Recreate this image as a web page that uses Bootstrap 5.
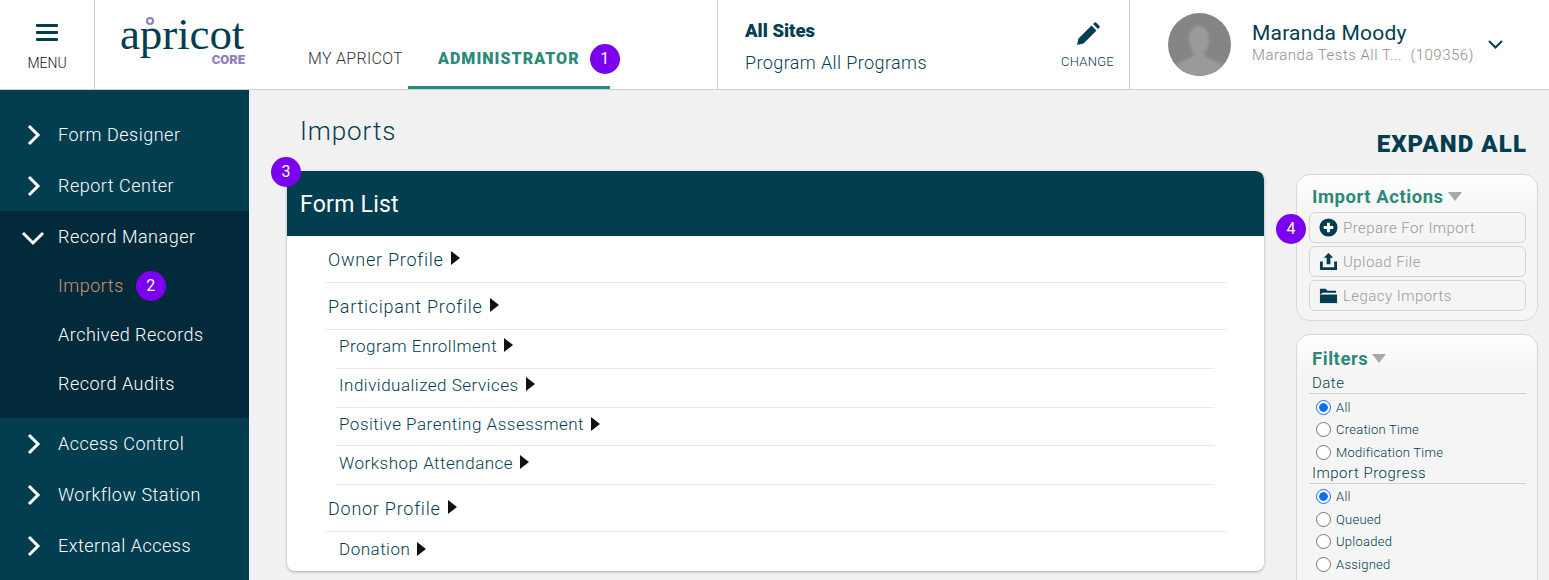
<!DOCTYPE html>
<html>

<head>
    <link rel="stylesheet" href="https://cdn.jsdelivr.net/npm/bootstrap@5.3.0/dist/css/bootstrap.min.css">
    <style>
        html, body { height: 580px; overflow: hidden; }
        body { font-family: Roboto, "Liberation Sans", sans-serif; color: #023e50; background: #f1f1f1; }
        .top { height: 90px; background: #fff; border-bottom: 1px solid #cfcfcf; }
        .menu-box { width: 95px; border-right: 1px solid #cfcfcf; font-size: 14px; font-weight: 300; color: #111; }
        .menu-box svg { margin-top: 24px; }
        .menu-box span { margin-top: 11px; }
        .logo-box { width: 213px; padding: 16px 0 0 25px; position: relative; }
        .logo { font-family: "Liberation Serif", serif; font-size: 45px; line-height: 36px; color: #023e50; letter-spacing: -.1px; }
        .logo-dot { position: absolute; left: 51px; top: 17px; width: 8px; height: 8px; border: 2px solid #8b80b9; border-radius: 50%; background: #fff; box-shadow: 0 0 0 1px #fff; }
        .core { font-size: 13px; font-weight: 900; color: #8b80b9; line-height: 12px; text-align: right; width: 125px; margin-top: 2px; }
        .tabs { width: 409px; }
        .tab { font-size: 16px; letter-spacing: .3px; height: 48px; }
        .tab-my { width: 100px; font-weight: 300; color: #333; padding-top: 6px; }
        .tab-admin { width: 202px; padding-left: 30px; padding-bottom: 9px; font-weight: 900; color: #2a8a7a; border-bottom: 3px solid #2a8a7a; letter-spacing: 1.05px; gap: 10px; }
        .tab-admin .num { flex: none; }
        .site-box { width: 413px; border-left: 1px solid #cfcfcf; border-right: 1px solid #cfcfcf; padding: 0 15px 0 27px; }
        .site-a { font-size: 18.500px; font-weight: 900; line-height: 24px; margin-top: 5px; }
        .site-b { font-size: 18px; font-weight: 300; line-height: 24px; margin-top: 8px; letter-spacing: .4px; }
        .pencil { margin-top: 5px; }
        .change { font-size: 13px; font-weight: 300; color: #023e50; margin-top: 6px; letter-spacing: .25px; }
        .user-box { padding-left: 38px; }
        .avatar { width: 63px; height: 63px; background: #858585; margin-right: 21px; }
        .avatar path { filter: blur(1.5px); }
        .user-a { font-size: 21px; line-height: 26px; letter-spacing: .2px; margin-top: -6px; }
        .user-b { font-size: 15px; line-height: 18px; font-weight: 300; color: #8e8e8e; letter-spacing: .5px; }
        .user-caret { margin-left: 14px; }
        .num { display: inline-flex; width: 30px; height: 30px; border-radius: 50%; background: #7b00f0; color: #fff; font-size: 16px; align-items: center; justify-content: center; font-weight: 400; letter-spacing: 0; }
        .side { width: 249px; height: 490px; background: #023e50; padding-top: 19px; flex: none; }
        .side a { display: flex; align-items: center; color: #fff; text-decoration: none; font-size: 18px; font-weight: 300; height: 51px; padding-left: 26px; letter-spacing: .5px; }
        .side a svg { width: 16px; height: 22px; margin-right: 16px; flex: none; }
        .side .open { background: #022a3a; height: 207px; }
        .side .sub { height: 49px; padding-left: 58px; padding-bottom: 2px; }
        .side .cur { color: #c9956f; gap: 12px; }
        .main { flex: 1; padding: 0 11px 0 38px; height: 490px; overflow: hidden; }
        h1.title { font-size: 26px; font-weight: 300; margin: 0 0 0 13px; padding-top: 25px; line-height: 32px; letter-spacing: .9px; }
        .form-card { margin-top: 24px; width: 977px; height: 400px; border: 0; border-radius: 8px; box-shadow: 0 1px 3px rgba(0,0,0,.3); overflow: hidden; }
        .form-card .card-header { height: 65px; background: #023e50; color: #fff; border: 0; font-size: 23px; font-weight: 400; padding: 17px 13px; border-radius: 8px 8px 0 0; letter-spacing: .25px; }
        .rows { margin: 0 37px 0 38px; }
        .rows .list-group-item { background: none; padding: 0 3px; border-width: 0 0 1px; border-color: #e9e9e9; color: #023e50; font-weight: 300; display: flex; align-items: center; gap: 7px; letter-spacing: .75px; }
        .rows .top-row { font-size: 18px; height: 47px; }
        .rows .sub-row { font-size: 17px; margin: 0 13px 0 11px; height: 39px; padding-bottom: 5px; letter-spacing: .5px; }
        .rows .sub-row.low { padding-bottom: 3px; }
        .rows .sub-row.short { height: 38px; }
        .tri { width: 0; height: 0; border-left: 9px solid #111; border-top: 7px solid transparent; border-bottom: 7px solid transparent; margin-top: -3px; }
        .rail { width: 242px; flex: none; margin-left: 32px; padding-top: 55px; }
        .expand { font-size: 24px; font-weight: 900; text-align: right; padding: 0 11px 0 0; line-height: 30px; letter-spacing: 1.1px; margin-top: -16px; }
        .panel { background: linear-gradient(#fff, #f5f5f5 40px); border: 1px solid #d8d8d8; border-radius: 14px; padding: 11px 11px 9px 12px; }
        .panel-top { margin-top: 15px; height: 147px; }
        .panel-top .panel-title { margin-bottom: 4px; }
        .panel-title { font-size: 18.500px; font-weight: 700; color: #2a8a7a; line-height: 22px; padding-left: 3px; display: flex; align-items: center; gap: 4px; letter-spacing: .55px; }
        .caret-g { width: 0; height: 0; border-top: 9px solid #a9a9a9; border-left: 7px solid transparent; border-right: 7px solid transparent; margin-top: -2px; }
        .act { width: 100%; height: 31px; margin-top: 3px; display: flex; align-items: center; gap: 5px; background: none; border: 1px solid #d4d4d4; border-radius: 6px; color: #9a9a9a; font-size: 15px; font-weight: 300; padding: 2px 0 0 9px; letter-spacing: .45px; }
        .act svg { width: 19px; height: 19px; flex: none; margin-top: -2px; }
        .panel-filters { margin-top: 13px; height: 300px; padding-top: 13px; }
        .f-head { font-size: 15px; font-weight: 300; line-height: 19px; border-bottom: 1px solid #cfcfcf; letter-spacing: .5px; padding-left: 3px; margin-bottom: 2px; }
        .f-head.first { margin-top: 4px; }
        .form-check { min-height: 0; height: 22.500px; margin: 0; padding-left: 27px; font-size: 13px; font-weight: 300; display: flex; align-items: center; letter-spacing: .25px; }
        .form-check .form-check-input { width: 15px; height: 15px; margin: 0 0 0 -20px; position: absolute; border: 1px solid #767676; }
        .form-check .form-check-input:checked { background: #fff radial-gradient(circle, #0d6efd 0, #0d6efd 4px, #fff 4.600px); border: 1.500px solid #0d6efd; }
    </style>
</head>

<body>
    <header class="top d-flex">
        <div class="menu-box d-flex flex-column align-items-center">
            <svg width="24" height="18" viewBox="0 0 24 18" fill="#023e50"><rect x="1" y="0" width="22" height="3" rx="1"/><rect x="1" y="7" width="22" height="3" rx="1"/><rect x="1" y="14" width="22" height="3" rx="1"/></svg>
            <span>MENU</span>
        </div>
        <div class="logo-box">
            <div class="logo">apricot</div>
            <span class="logo-dot"></span>
            <div class="core">CORE</div>
        </div>
        <div class="tabs d-flex align-items-end">
            <div class="tab tab-my">MY APRICOT</div>
            <div class="tab tab-admin d-flex align-items-center">ADMINISTRATOR <span class="num">1</span></div>
        </div>
        <div class="site-box d-flex align-items-center justify-content-between">
            <div>
                <div class="site-a">All Sites</div>
                <div class="site-b">Program All Programs</div>
            </div>
            <div class="d-flex flex-column align-items-center">
                <svg class="pencil" width="24" height="24" viewBox="0 0 24 24" fill="#023e50"><path d="M1 23l1.500-6.500L15.500 3.500l5 5L7.500 21.500zM17 2l1.300-1.300a1.500 1.500 0 0 1 2 0l3 3a1.500 1.500 0 0 1 0 2L22 7z"/></svg>
                <span class="change">CHANGE</span>
            </div>
        </div>
        <div class="user-box d-flex align-items-center">
            <div class="avatar rounded-circle overflow-hidden">
                <svg width="63" height="63" viewBox="0 0 63 63"><path d="M31 13c7 0 10 6 10 14 0 6-3 10-5 13 0 3 3 5 9 7 6 2 11 5 12 9l-6 7H11l-6-7c2-4 7-7 12-9 6-2 9-4 9-7-2-3-5-7-5-13 0-8 3-14 10-14z" fill="#9a9a9a"/></svg>
            </div>
            <div>
                <div class="user-a">Maranda Moody</div>
                <div class="user-b">Maranda Tests All T...&nbsp; (109356)</div>
            </div>
            <svg class="user-caret" width="15" height="9" viewBox="0 0 15 9" fill="none" stroke="#023e50" stroke-width="2"><path d="M1 1l6.500 6.500L14 1"/></svg>
        </div>
    </header>

    <div class="d-flex">
        <nav class="side">
            <a href="#"><svg viewBox="0 0 16 22" fill="none" stroke="#fff" stroke-width="3"><path d="M3 2l9 9-9 9"/></svg>Form Designer</a>
            <a href="#"><svg viewBox="0 0 16 22" fill="none" stroke="#fff" stroke-width="3"><path d="M3 2l9 9-9 9"/></svg>Report Center</a>
            <div class="open">
                <a href="#"><svg viewBox="0 0 16 22" fill="none" stroke="#fff" stroke-width="3" style="overflow:visible"><path d="M-3 7l10 10 10-10"/></svg>Record Manager</a>
                <a href="#" class="sub cur">Imports <span class="num">2</span></a>
                <a href="#" class="sub">Archived Records</a>
                <a href="#" class="sub">Record Audits</a>
            </div>
            <a href="#"><svg viewBox="0 0 16 22" fill="none" stroke="#fff" stroke-width="3"><path d="M3 2l9 9-9 9"/></svg>Access Control</a>
            <a href="#"><svg viewBox="0 0 16 22" fill="none" stroke="#fff" stroke-width="3"><path d="M3 2l9 9-9 9"/></svg>Workflow Station</a>
            <a href="#"><svg viewBox="0 0 16 22" fill="none" stroke="#fff" stroke-width="3"><path d="M3 2l9 9-9 9"/></svg>External Access</a>
        </nav>

        <main class="main d-flex">
            <div>
                <h1 class="title">Imports</h1>
                <div class="position-relative">
                    <span class="num position-absolute" style="left:-16px;top:-14px;z-index:2">3</span>
                    <div class="card form-card">
                        <div class="card-header">Form List</div>
                        <div class="list-group list-group-flush rows">
                            <div class="list-group-item top-row">Owner Profile <span class="tri"></span></div>
                            <div class="list-group-item top-row">Participant Profile <span class="tri"></span></div>
                            <div class="list-group-item sub-row">Program Enrollment <span class="tri"></span></div>
                            <div class="list-group-item sub-row">Individualized Services <span class="tri"></span></div>
                            <div class="list-group-item sub-row short low">Positive Parenting Assessment <span class="tri"></span></div>
                            <div class="list-group-item sub-row low">Workshop Attendance <span class="tri"></span></div>
                            <div class="list-group-item top-row">Donor Profile <span class="tri"></span></div>
                            <div class="list-group-item sub-row low border-0">Donation <span class="tri"></span></div>
                        </div>
                    </div>
                </div>
            </div>
            <aside class="rail">
                <div class="expand">EXPAND ALL</div>
                <div class="panel panel-top position-relative">
                    <span class="num position-absolute" style="left:-21px;top:39px">4</span>
                    <div class="panel-title">Import Actions <span class="caret-g"></span></div>
                    <button class="act"><svg viewBox="0 0 20 20"><circle cx="10" cy="10" r="9.500" fill="#023e50"/><path d="M10 5v10M5 10h10" stroke="#fff" stroke-width="3"/></svg>Prepare For Import</button>
                    <button class="act"><svg viewBox="0 0 20 20" fill="#023e50"><path d="M10 1l5 5h-3v7H8V6H5z"/><path d="M1 10h3v6h12v-6h3v9H1z"/></svg>Upload File</button>
                    <button class="act"><svg viewBox="0 0 20 20" fill="#023e50"><path d="M1 3h6l2 2h9v2H4L1 9z"/><path d="M1 9h18v9H1z"/></svg>Legacy Imports</button>
                </div>
                <div class="panel panel-filters">
                    <div class="panel-title">Filters <span class="caret-g"></span></div>
                    <div class="f-head first">Date</div>
                    <div class="form-check"><input class="form-check-input" type="radio" name="d" checked><label class="form-check-label">All</label></div>
                    <div class="form-check"><input class="form-check-input" type="radio" name="d"><label class="form-check-label">Creation Time</label></div>
                    <div class="form-check"><input class="form-check-input" type="radio" name="d"><label class="form-check-label">Modification Time</label></div>
                    <div class="f-head">Import Progress</div>
                    <div class="form-check"><input class="form-check-input" type="radio" name="p" checked><label class="form-check-label">All</label></div>
                    <div class="form-check"><input class="form-check-input" type="radio" name="p"><label class="form-check-label">Queued</label></div>
                    <div class="form-check"><input class="form-check-input" type="radio" name="p"><label class="form-check-label">Uploaded</label></div>
                    <div class="form-check"><input class="form-check-input" type="radio" name="p"><label class="form-check-label">Assigned</label></div>
                </div>
            </aside>
        </main>
    </div>

    <script src="https://cdn.jsdelivr.net/npm/bootstrap@5.3.0/dist/js/bootstrap.bundle.min.js"></script>
</body>

</html>
